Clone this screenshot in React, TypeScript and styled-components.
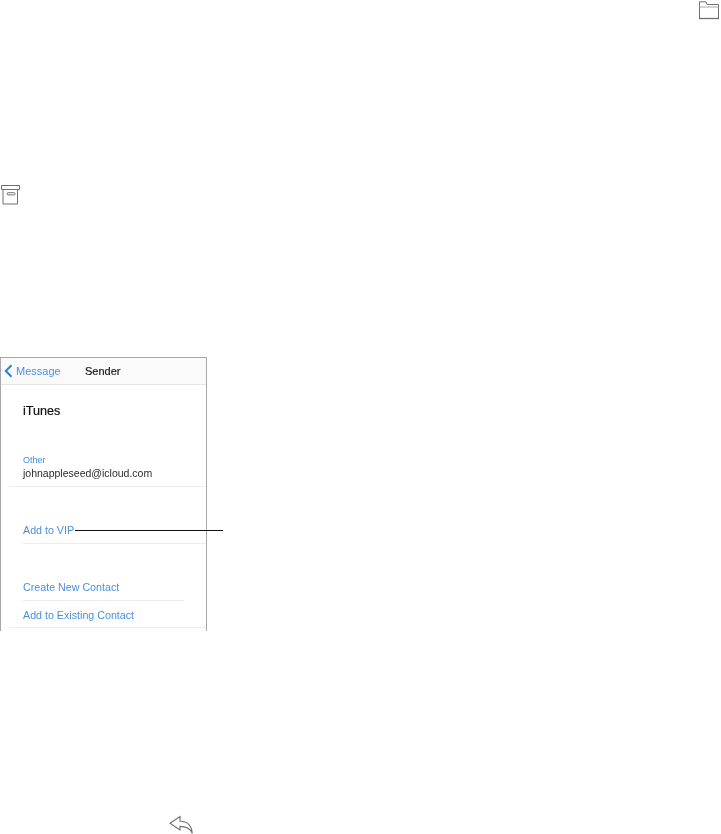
import React from "react";
import styled, { createGlobalStyle } from "styled-components";

const Global = createGlobalStyle`
  html, body { margin: 0; padding: 0; background: #fff; }
  body { font-family: "Liberation Sans", Arial, sans-serif; }
`;

const Page = styled.main`
  width: 721px;
  height: 834px;
  overflow: hidden;
  display: flex;
  flex-direction: column;
`;

const FolderRow = styled.div`
  display: flex;
  justify-content: flex-end;
  padding: 1px 1px 0 0;
  height: 19px;
`;

const ArchiveRow = styled.div`
  display: flex;
  padding: 165px 0 0 1px;
  height: 21px;
`;

const Shot = styled.section`
  position: relative;
  width: 207px;
  height: 274px;
  margin-top: 151px;
  box-sizing: border-box;
  border: 1px solid #a8a8a8;
  border-width: 1px 1px 0 1px;
  display: flex;
  flex-direction: column;
  background: #fff;
`;

const NavBar = styled.header`
  height: 27px;
  flex: none;
  display: flex;
  align-items: center;
  box-sizing: border-box;
  padding-left: 3px;
  background: #fafafa;
  border-bottom: 1px solid #e6e6e6;
`;

const Back = styled.span`
  display: flex;
  align-items: center;
  gap: 3px;
  width: 81px;
  font-size: 11px;
  color: #4a90e2;
  filter: blur(0.4px);
`;

const NavTitle = styled.span`
  font-size: 11px;
  color: #1a1a1a;
  filter: blur(0.35px);
  -webkit-text-stroke: 0.2px #1a1a1a;
`;

const Name = styled.div`
  margin: 19px 0 0 22px;
  height: 15px;
  line-height: 15px;
  font-size: 12.6px;
  color: #111;
  -webkit-text-stroke: 0.2px #111;
  filter: blur(0.35px);
`;

const Group = styled.div<{ $top: number }>`
  margin-top: ${(p) => p.$top}px;
  display: flex;
  flex-direction: column;
`;

const Label = styled.div`
  padding-left: 22px;
  height: 10px;
  line-height: 10px;
  font-size: 9px;
  color: #3f8fdd;
  filter: blur(0.35px);
`;

const Row = styled.div<{ $h: number; $link?: boolean }>`
  height: ${(p) => p.$h}px;
  padding-left: 22px;
  display: flex;
  align-items: center;
  font-size: ${(p) => (p.$link ? "10.7px" : "10.5px")};
  color: ${(p) => (p.$link ? "#4b8fdc" : "#2b2b2b")};
  filter: blur(0.4px);
`;

const Divider = styled.div<{ $inset?: number; $gap: number; $end?: number }>`
  height: 1px;
  margin: ${(p) => p.$gap}px ${(p) => p.$end ?? 0}px 0 ${(p) => p.$inset ?? 22}px;
  background: #ededed;
`;

const Leader = styled.div`
  position: absolute;
  left: 74px;
  top: 172px;
  width: 148px;
  height: 1px;
  background: #111;
`;

const ReplyRow = styled.div`
  display: flex;
  padding: 184px 0 0 169px;
`;

const IconWrap = styled.span`
  display: block;
  line-height: 0;
  filter: blur(0.3px);
`;

const Chevron = () => (
  <svg width="9" height="14" viewBox="0 0 9 14" fill="none">
    <path d="M7.5 1.2 1.8 7l5.7 5.8" stroke="#2f7fdc" strokeWidth="2" />
  </svg>
);

const FolderIcon = () => (
  <svg width="22" height="19" viewBox="0 0 22 19" fill="none" stroke="#707070">
    <path d="M1.5 17.5V.8h6.5l1 2.7h11.5v14z" strokeWidth="1" />
    <path d="M1.5 6h19" strokeWidth="1" stroke="#a8a8a8" />
    <path d="M1 17.5h20" strokeWidth="1.3" />
  </svg>
);

const ArchiveIcon = () => (
  <svg width="20" height="21" viewBox="0 0 20 21" fill="none" stroke="#707070" strokeWidth="1">
    <path d="M.5 .5h18v4H.5z" />
    <path d="M2 4.5v14.500h14.500v-14.500" />
    <rect x="6" y="7.700" width="8" height="2.200" rx="1.100" />
  </svg>
);

const ReplyIcon = () => (
  <svg width="25" height="19" viewBox="0 0 25 19" fill="none" stroke="#707070" strokeWidth="1.1">
    <path d="M1 8.200 11 1.500v4.700c7 0 11.500 3.500 12.300 12-2.300-5-6-6.800-12.300-6.800v3.600z" />
  </svg>
);

export default function App() {
  return (
    <Page>
      <Global />
      <FolderRow>
        <IconWrap><FolderIcon /></IconWrap>
      </FolderRow>
      <ArchiveRow>
        <IconWrap><ArchiveIcon /></IconWrap>
      </ArchiveRow>
      <Shot>
        <NavBar>
          <Back>
            <Chevron />
            Message
          </Back>
          <NavTitle>Sender</NavTitle>
        </NavBar>
        <Name>iTunes</Name>
        <Group $top={36}>
          <Label>Other</Label>
          <Row $h={16}>johnappleseed@icloud.com</Row>
          <Divider $gap={5} $inset={8} />
        </Group>
        <Group $top={36}>
          <Row $h={14} $link>Add to VIP</Row>
          <Divider $gap={6} />
        </Group>
        <Group $top={36}>
          <Row $h={13} $link>Create New Contact</Row>
          <Divider $gap={7} $end={22} />
        </Group>
        <Group $top={7}>
          <Row $h={14} $link>Add to Existing Contact</Row>
          <Divider $gap={5} $inset={8} />
        </Group>
        <Leader />
      </Shot>
      <ReplyRow>
        <IconWrap><ReplyIcon /></IconWrap>
      </ReplyRow>
    </Page>
  );
}
